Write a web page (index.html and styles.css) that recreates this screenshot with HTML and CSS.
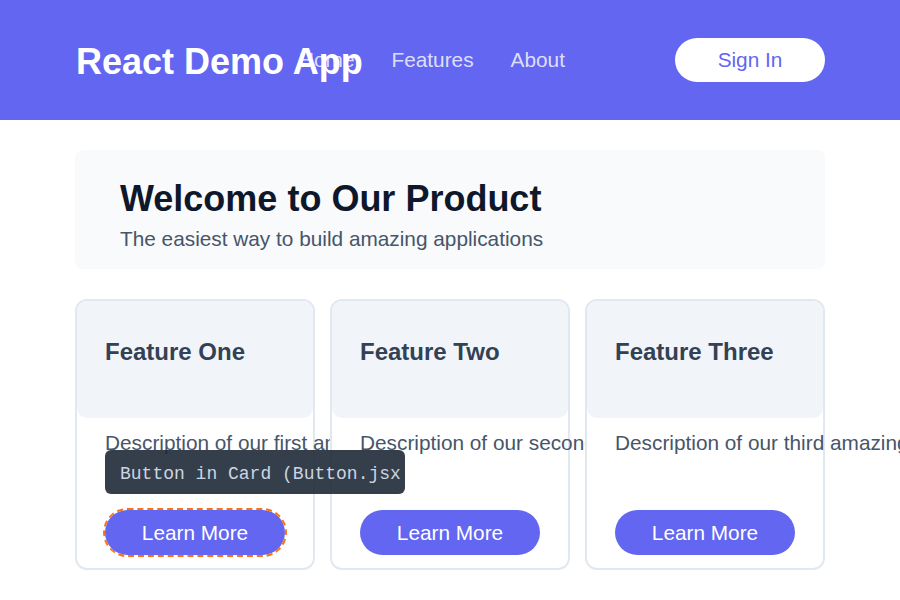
FILE: index.html
```html
<!DOCTYPE html>
<html lang="en">
<head>
<meta charset="utf-8">
<title>React Demo App</title>
<link rel="stylesheet" href="styles.css">
</head>
<body>
<header class="site-header">
  <div class="container header-inner">
    <div class="logo">React Demo App</div>
    <nav class="nav">
      <a class="nav-link" href="#">Home</a>
      <a class="nav-link" href="#">Features</a>
      <a class="nav-link" href="#">About</a>
    </nav>
    <button class="sign-in">Sign In</button>
  </div>
</header>
<main class="container">
  <section class="hero">
    <h1 class="hero-title">Welcome to Our Product</h1>
    <p class="hero-sub">The easiest way to build amazing applications</p>
  </section>
  <section class="cards">
    <article class="card">
      <div class="card-head"><h3 class="card-title">Feature One</h3></div>
      <p class="card-desc">Description of our first amazing feature</p>
      <div class="btn-wrap">
        <div class="tooltip"><span class="tooltip-text">Button in Card (Button.jsx)</span></div>
        <button class="btn btn-inspected">Learn More</button>
      </div>
    </article>
    <article class="card">
      <div class="card-head"><h3 class="card-title">Feature Two</h3></div>
      <p class="card-desc">Description of our second amazing feature</p>
      <div class="btn-wrap">
        <button class="btn">Learn More</button>
      </div>
    </article>
    <article class="card">
      <div class="card-head"><h3 class="card-title">Feature Three</h3></div>
      <p class="card-desc">Description of our third amazing feature</p>
      <div class="btn-wrap">
        <button class="btn">Learn More</button>
      </div>
    </article>
  </section>
</main>
</body>
</html>
```

FILE: styles.css
```css
html, body {
  margin: 0;
  padding: 0;
}
body {
  font-family: "Liberation Sans", Arial, sans-serif;
  background: #ffffff;
  overflow-x: hidden;
}
.container {
  width: 750px;
  margin: 0 auto;
}
.site-header {
  background: #6366f1;
  height: 120px;
}
.header-inner {
  display: flex;
  align-items: center;
  height: 120px;
}
.logo {
  width: 223px;
  flex-shrink: 0;
  white-space: nowrap;
  color: #ffffff;
  font-weight: bold;
  font-size: 36px;
  line-height: 42px;
  padding-left: 1px;
  margin-top: 4px;
}
.nav {
  display: flex;
  gap: 36px;
}
.nav-link {
  color: rgba(255, 255, 255, 0.8);
  text-decoration: none;
  font-size: 20.8px;
  line-height: 24px;
}
.nav-link + .nav-link {
  margin-left: 1px;
}
.sign-in {
  margin-left: auto;
  width: 150px;
  height: 44px;
  border: none;
  border-radius: 9999px;
  background: #ffffff;
  color: #6366f1;
  font-family: "Liberation Sans", Arial, sans-serif;
  font-size: 20.8px;
  padding: 0;
}
.hero {
  margin-top: 30px;
  background: #f8fafc;
  border-radius: 8px;
  padding: 28px 45px 18px;
}
.hero-title {
  margin: 0 0 7px;
  font-size: 36px;
  line-height: 42px;
  font-weight: bold;
  color: #0f172a;
}
.hero-sub {
  margin: 0;
  font-size: 20.8px;
  line-height: 24px;
  color: #475569;
}
.cards {
  margin-top: 30px;
  display: flex;
  gap: 15px;
}
.card {
  flex: 1 1 0;
  min-width: 0;
  background: #ffffff;
  border: 2px solid #e2e8f0;
  border-radius: 12px;
  padding-bottom: 13px;
}
.card-head {
  background: #f1f5f9;
  border-radius: 10px;
  height: 117px;
  box-sizing: border-box;
  padding: 37px 28px 0;
}
.card-title {
  margin: 0;
  font-size: 24px;
  line-height: 28px;
  font-weight: bold;
  color: #334155;
}
.card-desc {
  margin: 13px 0 0;
  padding-left: 28px;
  white-space: nowrap;
  font-size: 20.8px;
  line-height: 24px;
  color: #475569;
}
.btn-wrap {
  position: relative;
  margin: 55px 0 0 28px;
  width: 180px;
}
.btn {
  display: block;
  width: 180px;
  height: 45px;
  border: none;
  border-radius: 9999px;
  background: #6366f1;
  color: #ffffff;
  font-family: "Liberation Sans", Arial, sans-serif;
  font-size: 20.8px;
  padding: 0;
}
.btn-inspected {
  outline: 2px dashed #f97316;
  outline-offset: 0;
}
.tooltip {
  position: absolute;
  left: 0;
  bottom: calc(100% + 16px);
  width: 300px;
  height: 44px;
  box-sizing: border-box;
  padding: 5px 15px 0;
  background: rgba(31, 41, 55, 0.9);
  border-radius: 6px;
  color: #cbd5e1;
  font-family: "Liberation Mono", "Courier New", monospace;
  font-size: 18px;
  line-height: 39px;
  white-space: nowrap;
  overflow: hidden;
  z-index: 10;
}
.tooltip-text {
  display: inline-block;
  max-width: 281px;
  overflow: hidden;
  vertical-align: top;
}
```
